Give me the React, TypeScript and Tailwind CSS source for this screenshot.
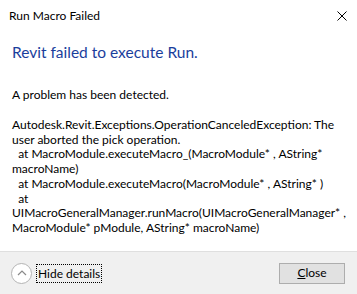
import React from "react";

const lines = [
  "Autodesk.Revit.Exceptions.OperationCanceledException: The",
  "user aborted the pick operation.",
  "  at MacroModule.executeMacro_(MacroModule* , AString*",
  "macroName)",
  "  at MacroModule.executeMacro(MacroModule* , AString* )",
  "  at",
  "UIMacroGeneralManager.runMacro(UIMacroGeneralManager* ,",
  "MacroModule* pModule, AString* macroName)",
];

export default function App() {
  return (
    <div
      className="w-[357px] h-[294px] bg-white flex flex-col overflow-hidden text-[12px] text-black"
      style={{ fontFamily: 'Lato, "Open Sans", sans-serif' }}
    >
      <div className="h-[32px] flex items-center justify-between pl-[9px] pr-[9px] shrink-0">
        <span className="text-[12px]">Run Macro Failed</span>
        <svg width="10" height="10" viewBox="0 0 10 10" className="mr-[1px]">
          <path d="M0.5 0.5 L9.5 9.5 M9.5 0.5 L0.5 9.5" stroke="#000" strokeWidth="1" />
        </svg>
      </div>
      <div className="flex-1 flex flex-col pl-[12px] pr-[10px]">
        <div className="mt-[10px] text-[15.5px] leading-[21px] text-[#1a3e9c]">
          Revit failed to execute Run.
        </div>
        <div className="mt-[24px] leading-[15px]">A problem has been detected.</div>
        <div className="mt-[16px] flex flex-col">
          {lines.map((l, i) => (
            <div key={i} className="whitespace-pre leading-[14.7px]">
              {l}
            </div>
          ))}
        </div>
      </div>
      <div className="h-[43px] shrink-0 bg-[#f0f0f0] border-t border-[#dfdfdf] flex items-center justify-between pl-[11px] pr-[12px]">
        <div className="flex items-center">
          <div className="w-[21px] h-[21px] rounded-full border border-[#b4b4b4] bg-white flex items-center justify-center">
            <svg width="10" height="6" viewBox="0 0 10 6">
              <path d="M1 5 L5 1 L9 5" fill="none" stroke="#8a8a8a" strokeWidth="1.2" />
            </svg>
          </div>
          <div className="ml-[4px] px-[1px] border border-dotted border-black leading-[17px]">
            Hide details
          </div>
        </div>
        <div className="w-[66px] h-[21px] bg-[#e1e1e1] border border-[#adadad] flex items-center justify-center">
          <span>
            <span className="underline">C</span>lose
          </span>
        </div>
      </div>
    </div>
  );
}
